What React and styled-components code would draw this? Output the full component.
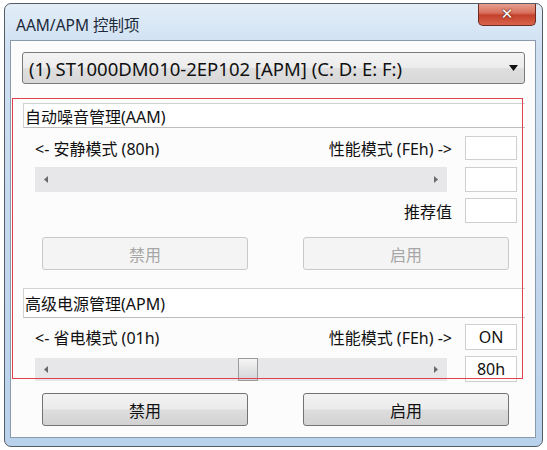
import React from 'react';
import styled, {createGlobalStyle} from 'styled-components';

const GlobalStyle = createGlobalStyle`
    body {
        margin: 0;
        background: #ffffff;
        font-family: "Noto Sans", "Noto Sans CJK SC", sans-serif;
    }
`;

const Window = styled.div`
    box-sizing: border-box;
    width: 539px;
    height: 444px;
    margin: 3px 0 0 4px;
    border: 1px solid #545c66;
    border-radius: 7px;
    background: linear-gradient(180deg, #e2edf8 0%, #cfe0f2 10%, #c2d7ed 60%, #b9d2ec 100%);
    display: flex;
    flex-direction: column;
    overflow: hidden;
`;

const TitleBar = styled.div`
    height: 36px;
    flex: none;
    display: flex;
    align-items: flex-start;
    justify-content: space-between;
    padding: 0 6px 0 11px;
`;

const Title = styled.div`
    margin-top: 9px;
    font-size: 15.5px;
    color: #1c2a3a;
`;

const CloseButton = styled.div`
    width: 58px;
    height: 23px;
    margin-top: -1px;
    box-sizing: border-box;
    border: 1px solid #6d2b22;
    border-top: none;
    border-radius: 0 0 5px 5px;
    background: linear-gradient(180deg, #e9a493 0%, #d7715d 45%, #c4412c 55%, #d9634a 100%);
    display: flex;
    align-items: center;
    justify-content: center;
    color: #fff;
    font: bold 15px "DejaVu Sans", sans-serif;
    text-shadow: 0 0 2px #5a1a10, 0 0 1px #5a1a10;
`;

const Client = styled.div`
    flex: 1;
    margin: 0 6px 8px 5px;
    border: 1px solid #8a9aab;
    background: #fcfcfc;
    display: flex;
    flex-direction: column;
`;

const Combo = styled.div`
    height: 32px;
    box-sizing: border-box;
    margin: 11px 10px 0 11px;
    border: 1px solid #7a7a7a;
    border-radius: 3px;
    background: linear-gradient(180deg, #f4f4f4 0%, #ececec 48%, #dedede 52%, #d8d8d8 100%);
    display: flex;
    align-items: center;
    justify-content: space-between;
    padding: 0 6px 0 6px;
    font-size: 18.5px;
    color: #111;
`;

const Group = styled.div`
    position: relative;
    margin-top: 14px;
    display: flex;
    flex-direction: column;

    &::after {
        content: '';
        position: absolute;
        left: 1px;
        top: 0;
        width: 511px;
        height: 281px;
        box-sizing: border-box;
        border: 1px solid #e2404e;
        pointer-events: none;
    }
`;

const SectionHeader = styled.div`
    height: ${p => p.$h}px;
    box-sizing: border-box;
    margin: ${p => p.$top}px 10px 0 12px;
    border: 1px solid #d2d2d2;
    border-right: none;
    border-bottom-color: #bdbdbd;
    background: #ffffff;
    display: flex;
    align-items: center;
    padding-left: 1px;
    font-size: 16px;
    color: #111;
`;

const Row = styled.div`
    display: flex;
    align-items: center;
    margin-top: ${p => p.$top}px;
    padding: 0 18px 0 24px;
`;

const Label = styled.div`
    flex: ${p => (p.$grow ? 1 : 'none')};
    font-size: 16px;
    color: #111;
    white-space: nowrap;
`;

const ValueBox = styled.div`
    width: 52px;
    height: ${p => p.$h}px;
    box-sizing: border-box;
    margin-left: 13px;
    border: 1px solid #cfcfcf;
    background: #ffffff;
    display: flex;
    align-items: center;
    justify-content: center;
    font-size: 16px;
    color: #111;
`;

const Track = styled.div`
    position: relative;
    flex: 1;
    margin-right: 5px;
    height: ${p => p.$h}px;
    background: #e7e7ea;
    display: flex;
    align-items: center;
    justify-content: space-between;
    padding: 0 9px;
`;

const Thumb = styled.div`
    position: absolute;
    top: 0;
    left: 203px;
    width: 20px;
    height: 100%;
    box-sizing: border-box;
    border: 1px solid #9a9a9a;
    background: linear-gradient(180deg, #f6f6f6 0%, #e4e4e4 50%, #d2d6da 100%);
`;

const Arrow = ({dir}) => (
    <svg width="4" height="7" viewBox="0 0 4 7">
        <path d={dir === 'left' ? 'M4 0 L0 3.5 L4 7 Z' : 'M0 0 L4 3.5 L0 7 Z'} fill="#6a6a6a"/>
    </svg>
);

const ButtonRow = styled.div`
    display: flex;
    gap: 55px;
    margin-top: ${p => p.$top}px;
    padding-left: 31px;
`;

const Button = styled.div`
    width: 206px;
    height: 33px;
    box-sizing: border-box;
    border: 1px solid ${p => (p.$disabled ? '#c9c9c9' : '#737373')};
    border-radius: 3px;
    background: ${p => (p.$disabled
        ? '#f4f4f4'
        : 'linear-gradient(180deg, #f3f3f3 0%, #ebebeb 48%, #dddddd 52%, #d2d2d2 100%)')};
    display: flex;
    align-items: center;
    justify-content: center;
    font-size: 16px;
    color: ${p => (p.$disabled ? '#a6a6a6' : '#111')};
`;

export default function App() {
    return (
        <>
            <GlobalStyle/>
            <Window>
                <TitleBar>
                    <Title>AAM/APM 控制项</Title>
                    <CloseButton>✕</CloseButton>
                </TitleBar>
                <Client>
                    <Combo>
                        <span>(1) ST1000DM010-2EP102 [APM] (C: D: E: F:)</span>
                        <svg width="9" height="6" viewBox="0 0 9 6">
                            <path d="M0 0 L9 0 L4.5 6 Z" fill="#111"/>
                        </svg>
                    </Combo>
                    <Group>
                        <SectionHeader $top={5} $h={25}>自动噪音管理(AAM)</SectionHeader>
                        <Row $top={8}>
                            <Label $grow>&lt;- 安静模式 (80h)</Label>
                            <Label>性能模式 (FEh) -&gt;</Label>
                            <ValueBox $h={24}/>
                        </Row>
                        <Row $top={7}>
                            <Track $h={25}>
                                <Arrow dir="left"/>
                                <Arrow dir="right"/>
                            </Track>
                            <ValueBox $h={25}/>
                        </Row>
                        <Row $top={6}>
                            <Label $grow/>
                            <Label>推荐值</Label>
                            <ValueBox $h={25}/>
                        </Row>
                        <ButtonRow $top={14}>
                            <Button $disabled>禁用</Button>
                            <Button $disabled>启用</Button>
                        </ButtonRow>
                        <SectionHeader $top={18} $h={30}>高级电源管理(APM)</SectionHeader>
                        <Row $top={6}>
                            <Label $grow>&lt;- 省电模式 (01h)</Label>
                            <Label>性能模式 (FEh) -&gt;</Label>
                            <ValueBox $h={26}>ON</ValueBox>
                        </Row>
                        <Row $top={6}>
                            <Track $h={23}>
                                <Arrow dir="left"/>
                                <Thumb/>
                                <Arrow dir="right"/>
                            </Track>
                            <ValueBox $h={26}>80h</ValueBox>
                        </Row>
                    </Group>
                    <ButtonRow $top={11}>
                        <Button>禁用</Button>
                        <Button>启用</Button>
                    </ButtonRow>
                </Client>
            </Window>
        </>
    );
}
